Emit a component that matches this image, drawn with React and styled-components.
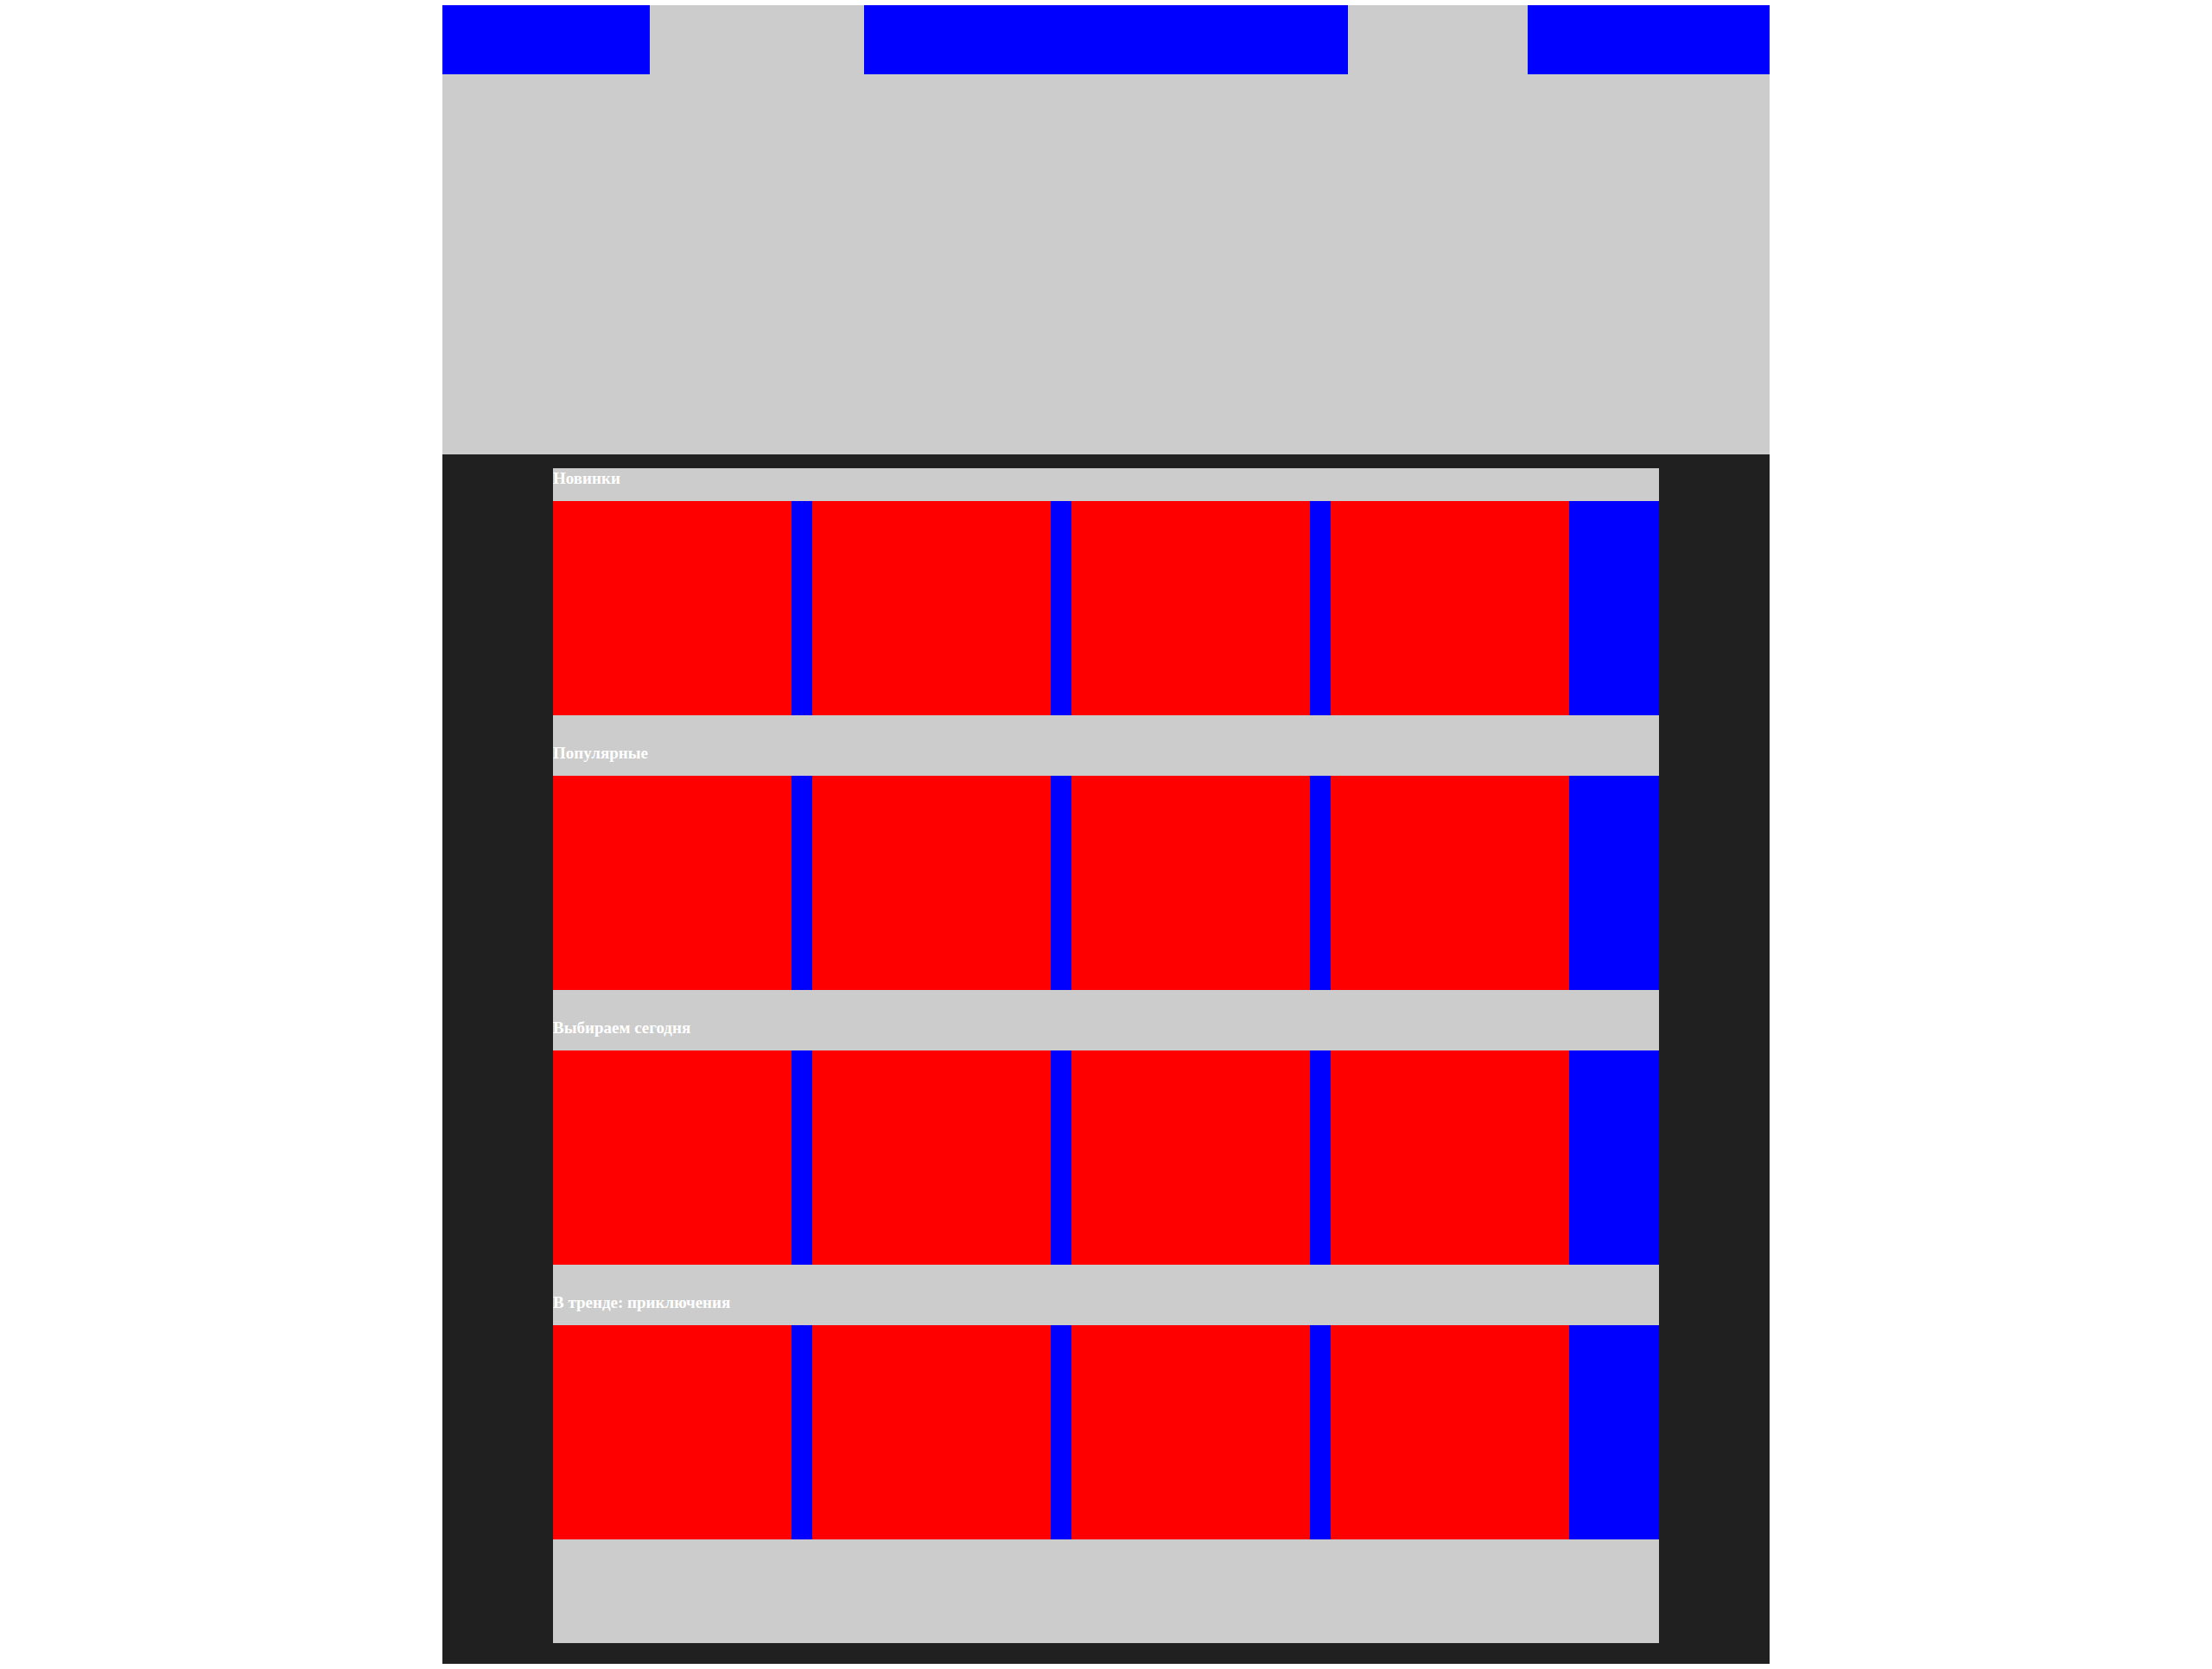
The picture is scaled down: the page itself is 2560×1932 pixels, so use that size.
import React from "react";
import styled, { createGlobalStyle } from "styled-components";

const GlobalStyle = createGlobalStyle`
  html, body { margin: 0; padding: 0; background: #ffffff; }
  body { margin: 6px 0; font-family: "Liberation Serif", "Times New Roman", serif; }
`;

const Page = styled.div`
  width: 1536px;
  margin: 0 auto;
`;

const Header = styled.header`
  background: #cccccc;
`;

const Nav = styled.nav`
  display: flex;
  height: 80px;
`;

const NavItem = styled.div`
  width: ${(p) => p.$w}px;
  height: 100%;
  background: ${(p) => (p.$filled ? "#0000ff" : "transparent")};
`;

const Hero = styled.div`
  height: 440px;
`;

const Main = styled.main`
  background: #202020;
  padding: 16px 128px 24px;
`;

const Panel = styled.div`
  background: #cccccc;
  display: flex;
  flex-direction: column;
  gap: 32px;
  padding-bottom: 120px;
`;

const Section = styled.section`
  display: flex;
  flex-direction: column;
`;

const Title = styled.h3`
  margin: 0;
  height: 38px;
  overflow: hidden;
  font-family: "Liberation Serif", "Times New Roman", serif;
  font-size: 19px;
  font-weight: bold;
  line-height: 23px;
  color: #ffffff;
`;

const Row = styled.div`
  display: flex;
  gap: 24px;
  height: 248px;
  background: #0000ff;
`;

const Card = styled.div`
  width: 276px;
  flex: none;
  background: #ff0000;
`;

const navItems = [
  { w: 240, filled: true },
  { w: 248, filled: false },
  { w: 560, filled: true },
  { w: 208, filled: false },
  { w: 280, filled: true },
];

const sections = [
  "Новинки",
  "Популярные",
  "Выбираем сегодня",
  "В тренде: приключения",
];

export default function App() {
  return (
    <>
      <GlobalStyle />
      <Page>
        <Header>
          <Nav>
            {navItems.map((n, i) => (
              <NavItem key={i} $w={n.w} $filled={n.filled} />
            ))}
          </Nav>
          <Hero />
        </Header>
        <Main>
          <Panel>
            {sections.map((s) => (
              <Section key={s}>
                <Title>{s}</Title>
                <Row>
                  {[0, 1, 2, 3].map((c) => (
                    <Card key={c} />
                  ))}
                </Row>
              </Section>
            ))}
          </Panel>
        </Main>
      </Page>
    </>
  );
}
